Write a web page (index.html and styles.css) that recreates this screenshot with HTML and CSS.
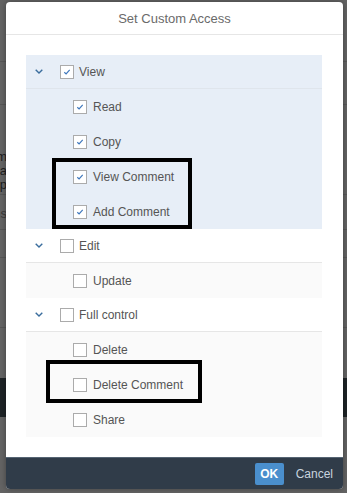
FILE: index.html
```html
<!DOCTYPE html>
<html>
<head>
<meta charset="utf-8">
<link rel="stylesheet" href="styles.css">
</head>
<body>
<div class="backdrop">
  <div class="bg-row h62"></div>
  <div class="bg-row h43"></div>
  <div class="bg-row h90">
    <div class="bg-text">Custom<br>Applica<br>Step</div>
  </div>
  <div class="bg-row h35"><div class="bg-text one">Items</div></div>
  <div class="bg-row h28"></div>
  <div class="bg-row h70"></div>
  <div class="bg-row h50 plain"></div>
  <div class="bg-bar"></div>
</div>

<div class="dialog">
  <header class="dlg-head">Set Custom Access</header>
  <div class="dlg-body">
    <ul class="tree">
      <li class="group selected">
        <div class="node head">
          <span class="chev"><svg viewBox="0 0 8 5" width="8" height="5"><path d="M0.7 0.7 L4 4 L7.3 0.7" fill="none" stroke="#3a6d9d" stroke-width="1.4"/></svg></span>
          <span class="cb"><svg viewBox="0 0 14 14" width="14" height="14"><path d="M4.3 7.3 L6.1 9 L9.7 4.9" fill="none" stroke="#3f78bd" stroke-width="1.2"/></svg></span>
          <span class="lbl">View</span>
        </div>
        <div class="node child">
          <span class="cb"><svg viewBox="0 0 14 14" width="14" height="14"><path d="M4.3 7.3 L6.1 9 L9.7 4.9" fill="none" stroke="#3f78bd" stroke-width="1.2"/></svg></span>
          <span class="lbl">Read</span>
        </div>
        <div class="node child">
          <span class="cb"><svg viewBox="0 0 14 14" width="14" height="14"><path d="M4.3 7.3 L6.1 9 L9.7 4.9" fill="none" stroke="#3f78bd" stroke-width="1.2"/></svg></span>
          <span class="lbl">Copy</span>
        </div>
        <div class="node child">
          <span class="cb"><svg viewBox="0 0 14 14" width="14" height="14"><path d="M4.3 7.3 L6.1 9 L9.7 4.9" fill="none" stroke="#3f78bd" stroke-width="1.2"/></svg></span>
          <span class="lbl">View Comment</span>
        </div>
        <div class="node child">
          <span class="cb"><svg viewBox="0 0 14 14" width="14" height="14"><path d="M4.3 7.3 L6.1 9 L9.7 4.9" fill="none" stroke="#3f78bd" stroke-width="1.2"/></svg></span>
          <span class="lbl">Add Comment</span>
        </div>
      </li>
      <li class="group">
        <div class="node head">
          <span class="chev"><svg viewBox="0 0 8 5" width="8" height="5"><path d="M0.7 0.7 L4 4 L7.3 0.7" fill="none" stroke="#3a6d9d" stroke-width="1.4"/></svg></span>
          <span class="cb"></span>
          <span class="lbl">Edit</span>
        </div>
        <div class="node child">
          <span class="cb"></span>
          <span class="lbl">Update</span>
        </div>
      </li>
      <li class="group">
        <div class="node head">
          <span class="chev"><svg viewBox="0 0 8 5" width="8" height="5"><path d="M0.7 0.7 L4 4 L7.3 0.7" fill="none" stroke="#3a6d9d" stroke-width="1.4"/></svg></span>
          <span class="cb"></span>
          <span class="lbl">Full control</span>
        </div>
        <div class="node child">
          <span class="cb"></span>
          <span class="lbl">Delete</span>
        </div>
        <div class="node child">
          <span class="cb"></span>
          <span class="lbl">Delete Comment</span>
        </div>
        <div class="node child">
          <span class="cb"></span>
          <span class="lbl">Share</span>
        </div>
      </li>
    </ul>
  </div>
  <footer class="dlg-foot">
    <button class="btn-ok">OK</button>
    <button class="btn-cancel">Cancel</button>
  </footer>
  <div class="mark mark-1"></div>
  <div class="mark mark-2"></div>
</div>
</body>
</html>
```

FILE: styles.css
```css
html, body {
  margin: 0;
  padding: 0;
}
body {
  width: 347px;
  height: 493px;
  overflow: hidden;
  background: #646464;
  font-family: "Liberation Sans", Arial, sans-serif;
  position: relative;
}

.backdrop {
  display: flex;
  flex-direction: column;
}
.bg-row {
  border-bottom: 1px solid #575757;
  box-sizing: border-box;
  position: relative;
}
.bg-row.plain { border-bottom: none; }
.h62 { height: 62px; }
.h43 { height: 43px; }
.h90 { height: 90px; }
.h35 { height: 35px; }
.h28 { height: 28px; }
.h70 { height: 70px; }
.h50 { height: 50px; }
.bg-text {
  width: 7px;
  overflow: hidden;
  direction: rtl;
  white-space: nowrap;
  font-size: 13px;
  line-height: 14px;
  color: #1e1e1e;
  padding-top: 45px;
}
.bg-text.one { padding-top: 12px; color: #3a3a3a; }
.bg-bar {
  height: 39px;
  background: #1e2326;
}

.dialog {
  position: absolute;
  left: 6px;
  top: 2px;
  width: 337px;
  height: 487px;
  background: #ffffff;
  border-radius: 4px;
  box-shadow: 0 0 6px rgba(0,0,0,0.35);
  display: flex;
  flex-direction: column;
  overflow: hidden;
}
.dlg-head {
  height: 32px;
  border-bottom: 1px solid #e6e6e6;
  display: flex;
  align-items: center;
  justify-content: center;
  font-size: 13px;
  color: #6a6a6a;
}
.dlg-body {
  flex: 1;
  padding: 20px 21px 0 20px;
}
.tree {
  list-style: none;
  margin: 0;
  padding: 0;
}
.group {
  background: #fafafa;
}
.group.selected {
  background: #e7eef7;
}
.node {
  display: flex;
  align-items: center;
  font-size: 12px;
  color: #555555;
}
.node.head {
  height: 33px;
  border-bottom: 1px solid #e6e6e6;
  padding-left: 9px;
  background: #ffffff;
}
.group.selected .node.head {
  background: #e7eef7;
  border-bottom-color: #dfe5ec;
}
.node.child {
  height: 35px;
  padding-left: 47px;
}
.chev {
  width: 8px;
  height: 5px;
  display: flex;
  margin-right: 17px;
}
.cb {
  width: 14px;
  height: 14px;
  box-sizing: border-box;
  border: 1px solid #ababab;
  background: #ffffff;
  display: flex;
  align-items: center;
  justify-content: center;
  flex: none;
}
.cb svg {
  display: block;
  margin: -1px;
}
.head .lbl { margin-left: 5px; }
.child .lbl { margin-left: 6px; }

.dlg-foot {
  height: 31px;
  border-top: 1px solid #556473;
  background: #303c49;
  display: flex;
  align-items: center;
  justify-content: flex-end;
  gap: 12px;
  padding-right: 10px;
}
.btn-ok {
  width: 29px;
  height: 22px;
  border: none;
  border-radius: 2px;
  background: #4a8fcd;
  color: #ffffff;
  font-family: "Liberation Sans", Arial, sans-serif;
  font-size: 12px;
  font-weight: bold;
  padding: 0;
}
.btn-cancel {
  border: none;
  background: transparent;
  color: #c9d3de;
  font-family: "Liberation Sans", Arial, sans-serif;
  font-size: 12px;
  padding: 0;
}

.mark {
  position: absolute;
  border: 4px solid #000000;
  box-sizing: border-box;
}
.mark-1 {
  left: 46px;
  top: 156px;
  width: 140px;
  height: 71px;
}
.mark-2 {
  left: 40px;
  top: 358px;
  width: 156px;
  height: 43px;
}
```
